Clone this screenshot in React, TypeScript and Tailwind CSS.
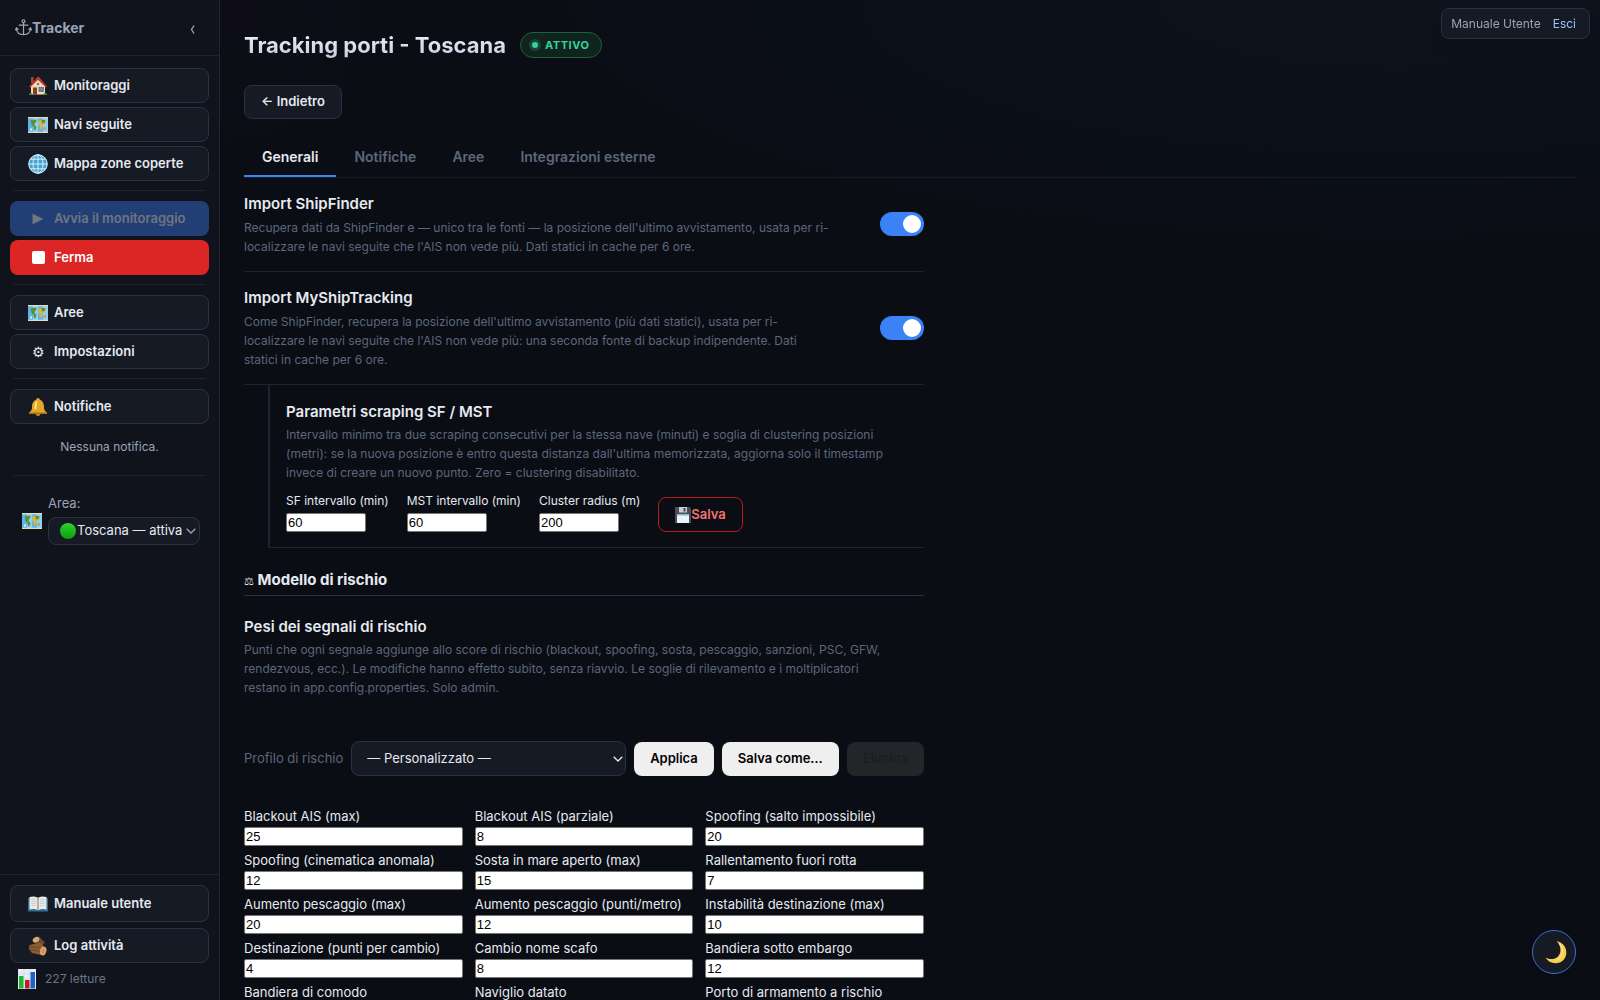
import { ReactNode } from "react"

const weights = [
  ["Blackout AIS (max)", "25"],
  ["Blackout AIS (parziale)", "8"],
  ["Spoofing (salto impossibile)", "20"],
  ["Spoofing (cinematica anomala)", "12"],
  ["Sosta in mare aperto (max)", "15"],
  ["Rallentamento fuori rotta", "7"],
  ["Aumento pescaggio (max)", "20"],
  ["Aumento pescaggio (punti/metro)", "12"],
  ["Instabilità destinazione (max)", "10"],
  ["Destinazione (punti per cambio)", "4"],
  ["Cambio nome scafo", "8"],
  ["Bandiera sotto embargo", "12"],
  ["Bandiera di comodo", "5"],
  ["Naviglio datato", "5"],
  ["Porto di armamento a rischio", "8"],
]

const params = [
  ["SF intervallo (min)", "60"],
  ["MST intervallo (min)", "60"],
  ["Cluster radius (m)", "200"],
]

const tabs = ["Generali", "Notifiche", "Aree", "Integrazioni esterne"]

const inputClass =
  "h-[19px] rounded-xs border border-[#767676] bg-white px-px font-['Liberation_Sans',sans-serif] text-[13px] leading-[17px] text-black"

const HouseIcon = () => (
  <svg viewBox="0 0 20 20" className="size-5">
    <rect x="3" y="1" width="2.5" height="6" fill="#9c4a3a" />
    <path d="M3 10 10 3.5 17 10v8.5H3z" fill="#f3dcb4" />
    <path d="M1 10.5 9.5 1 11 1l8 9.5-1.2 1L10 3.8 2.2 11.5z" fill="#c5362b" />
    <rect x="5" y="11.5" width="4" height="7" fill="#7c4023" />
    <rect x="11" y="11.5" width="4.5" height="4" fill="#4b8fd0" stroke="#8a4b2b" strokeWidth=".7" />
    <circle cx="10" cy="8" r="1.3" fill="#6b7f99" />
    <path d="M1 18.5q1-2.5 3-1.2v1.7H1zM15 19q.5-2.5 2.5-2 2 .5 1.5 2z" fill="#4f8a35" />
  </svg>
)

const MapIcon = () => (
  <svg viewBox="0 0 20 20" className="size-5">
    <path d="M0 2h20v16H0z" fill="#8fd0f2" />
    <path d="M0 2h5v16H0zM10 2h5v16h-5z" fill="#5db4e6" />
    <path d="M0 2h20v1.2H0zM0 16.8h20V18H0z" fill="#e6dcb8" />
    <path d="M2.5 5.5 7 4.5l2 1.5-2 2-.5 2 2 2-1 3-1.3.6-.7-3.6-2-2z" fill="#5c8f38" />
    <path d="M10.5 6 14 4.5l4 1-.5 3-2 .5-1 2-.8 4-1.7-1-.5-3.5-1.5-1z" fill="#d8b83f" />
    <path d="M13.5 5h4l-1 3-2.5.5z" fill="#5c8f38" />
    <circle cx="16.8" cy="13.5" r="1.2" fill="#e08a35" />
    <path d="M2 13.5h2v2H2z" fill="#e8efe6" />
  </svg>
)

const GlobeIcon = () => (
  <svg viewBox="0 0 20 20" className="size-5">
    <circle cx="10" cy="10" r="9.7" fill="#4aa3cf" />
    <g fill="none" stroke="#d4eef8" strokeWidth="1">
      <circle cx="10" cy="10" r="9.2" />
      <ellipse cx="10" cy="10" rx="5" ry="9.2" />
      <path d="M10 .8v18.4M.8 10h18.4M2.5 5.2h15M2.5 14.8h15" />
    </g>
  </svg>
)

const BellIcon = () => (
  <svg viewBox="0 0 20 20" className="size-5">
    <path d="M10 1c1 0 1.8.7 1.8 1.8C15 4 16 7 16 10c0 3 .8 4 3 5.5v1.3H1v-1.3C3.2 14 4 13 4 10c0-3 1-6 4.2-7.2C8.2 1.7 9 1 10 1z" fill="#e3a52a" />
    <path d="M8 4.5C6.5 6 6.5 9 6.3 12h2.2c0-3 .2-6 1-8z" fill="#ffe08a" />
    <path d="M1 15.5h18V17H1z" fill="#a96f14" />
    <path d="M7.5 17h5q-.5 2-2.5 2t-2.5-2z" fill="#c98a1c" />
  </svg>
)

const BookIcon = () => (
  <svg viewBox="0 0 20 20" className="size-5">
    <path d="M0 4h20v13.5H0z" fill="#2d6f8f" />
    <path d="M1.5 3Q6 1.5 10 3.8 14 1.5 18.5 3v12.5q-4.5-1.5-8.5.8-4-2.3-8.5-.8z" fill="#e9e9e6" />
    <path d="M10 3.8v12.5" stroke="#8b8b88" strokeWidth="1.2" />
    <path d="M3.5 5.5H8M3.5 7.5H8M3.5 9.5H8M3.5 11.5H8M12 5.5h4.5M12 7.5h4.5M12 9.5h4.5M12 11.5h4.5" stroke="#c4c4c1" strokeWidth=".7" />
  </svg>
)

const WoodIcon = () => (
  <svg viewBox="0 0 20 20" className="size-5">
    <path d="M5 3.5 11 .5l6 6-5 5.5z" fill="#70492b" />
    <ellipse cx="8" cy="3.8" rx="3.5" ry="2.6" transform="rotate(-30 8 3.8)" fill="#d9a86c" />
    <path d="M1.5 9 12 6.5l5.5 5.5-2.5 7.5L4 17 .8 13z" fill="#8a5b36" />
    <path d="M2 10.5 12 12M2 13.5l10 2" stroke="#6b472a" strokeWidth="1" />
    <ellipse cx="15.2" cy="15" rx="3.2" ry="4.5" transform="rotate(15 15.2 15)" fill="#dba56a" />
    <ellipse cx="15.2" cy="15" rx="1.6" ry="2.5" transform="rotate(15 15.2 15)" fill="#cf9455" />
  </svg>
)

const ChartIcon = () => (
  <svg viewBox="0 0 18 20" className="h-5 w-[18px]">
    <path d="M0 0h18v20H0z" fill="#e8eef4" />
    <path d="M0 5h18M0 10h18M0 15h18M6 0v20M12 0v20" stroke="#c3d2df" strokeWidth=".6" />
    <path d="M1 7h4.5v12.5H1z" fill="#1fb52c" />
    <path d="M7 11h4.5v8.5H7z" fill="#c41c24" />
    <path d="M12.5 3H17v16.5h-4.5z" fill="#1d62c4" />
  </svg>
)

const FloppyIcon = () => (
  <svg viewBox="0 0 16 16" className="size-4">
    <path d="M0 0h14.5L16 1.5V16H0z" fill="#4a4f57" />
    <path d="M4 0h8v5.5H4z" fill="#c9ced4" />
    <path d="M8.5 1h2v3.5h-2z" fill="#42474f" />
    <path d="M2 7h12v9H2z" fill="#eef3f7" />
    <path d="M2 7h12v1.5H2z" fill="#7fb9dd" />
  </svg>
)

const AnchorIcon = () => (
  <svg viewBox="0 0 18 18" className="size-[17px]" fill="none" stroke="#a3a6a8" strokeWidth="1.3">
    <circle cx="9" cy="2.3" r="1.5" />
    <path d="M9 4v12.5M4 6.5h10M1.500 10Q2 16.5 9 16.5T16.5 10M.5 12l1-2.5 2.2 1.5M17.5 12l-1-2.5-2.2 1.5" />
  </svg>
)

const MoonIcon = () => (
  <svg viewBox="0 0 22 24" className="h-6 w-[22px]">
    <path d="M11.5 1C18 2.5 21.8 7.5 21.3 13.5 20.8 19.5 16 23.5 10.5 23.3 6 23.2 2.5 21 .8 17.8 4.5 19.5 9.5 19.8 13 16.5 17 12.5 16 5.5 11.5 1z" fill="#f7cf4a" />
    <path d="M14.5 3.5C19 9 18.5 16.5 12 20" fill="none" stroke="#fbe48c" strokeWidth="1.3" />
  </svg>
)

const Chevron = ({ className }: { className: string }) => (
  <svg viewBox="0 0 10 6" className={`pointer-events-none absolute h-1.5 w-2.5 ${className}`} fill="none" stroke="currentColor" strokeWidth="1.3">
    <path d="m.7.7 4.300 4.300L9.300.7" />
  </svg>
)

const NavButton = ({ icon, height = "h-[35px]", children }: { icon: ReactNode; height?: string; children: ReactNode }) => (
  <button className={`flex w-full shrink-0 items-center gap-1.5 rounded-lg border border-[#2a3142] bg-[#161a24] pl-[17px] text-[13px] font-semibold text-[#e6e9f0] ${height}`}>
    <span className="flex w-5 justify-center">{icon}</span>
    {children}
  </button>
)

const Divider = () => <hr className="mx-[3px] mt-[5px] mb-1.5 border-[#1e2330]" />

const Sidebar = () => {
  return (
    <aside className="flex w-[220px] shrink-0 flex-col border-r border-[#1e2330] bg-[#10131c]">
      <div className="flex h-14 shrink-0 items-center justify-between border-b border-[#1e2330] pr-6 pl-[15px]">
        <span className="flex items-center text-sm font-bold text-[#9aa3b8]">
          <AnchorIcon />
          Tracker
        </span>
        <button aria-label="Comprimi" className="text-[#9aa3b8]">
          <svg viewBox="0 0 5 9" className="mt-1 h-[9px] w-[5px]" fill="none" stroke="currentColor" strokeWidth="1.3">
            <path d="M4 .5 1.5 4.5 4 8.5" />
          </svg>
        </button>
      </div>
      <nav className="flex grow flex-col gap-1 px-2.5 pt-3">
        <NavButton icon={<HouseIcon />}>Monitoraggi</NavButton>
        <NavButton icon={<MapIcon />}>Navi seguite</NavButton>
        <NavButton icon={<GlobeIcon />}>Mappa zone coperte</NavButton>
        <Divider />
        <button disabled className="flex h-[35px] shrink-0 items-center gap-1.5 rounded-lg bg-[#223f75] pl-[18px] text-[13px] font-semibold text-[#70757f]">
          <span className="flex w-5 justify-center">
            <svg viewBox="0 0 12 12" className="size-3" fill="currentColor">
              <path d="M.5.8v10.4L11.5 6z" />
            </svg>
          </span>
          Avvia il monitoraggio
        </button>
        <button className="flex h-[35px] shrink-0 items-center gap-1.5 rounded-lg bg-[#dc2626] pl-[18px] text-[13px] font-semibold text-white">
          <span className="flex w-5 justify-center">
            <span className="size-[13px] rounded-xs bg-white" />
          </span>
          Ferma
        </button>
        <Divider />
        <NavButton icon={<MapIcon />}>Aree</NavButton>
        <NavButton icon={<span className="text-sm font-normal">⚙</span>}>Impostazioni</NavButton>
        <Divider />
        <NavButton icon={<BellIcon />}>Notifiche</NavButton>
        <p className="py-[9px] text-center text-xs leading-5 text-[#9aa3b8]">Nessuna notifica.</p>
        <Divider />
        <div className="flex items-center gap-1.5 pt-[7px] pr-[9px] pl-3">
          <span className="shrink-0 pt-1">
            <MapIcon />
          </span>
          <div className="flex min-w-0 grow flex-col gap-1">
            <label htmlFor="area" className="text-[13px] leading-5 text-[#9aa3b8]">Area:</label>
            <div className="relative">
              <select id="area" className="h-7 w-full appearance-none rounded-lg border border-[#2a3142] bg-[#161a24] pl-7 text-[13px] text-[#e6e9f0]">
                <option>Toscana — attiva</option>
              </select>
              <span className="pointer-events-none absolute top-1.5 left-3 size-4 rounded-full bg-linear-to-b from-[#2bd42b] to-[#0a9c12]" />
              <Chevron className="top-[11px] right-1 text-[#9aa3b8]" />
            </div>
          </div>
        </div>
      </nav>
      <div className="flex flex-col gap-1.5 border-t border-[#1e2330] px-2.5 pt-2.5 pb-[11px]">
        <NavButton icon={<BookIcon />} height="h-[37px]">Manuale utente</NavButton>
        <NavButton icon={<WoodIcon />}>Log attività</NavButton>
        <div className="flex items-center gap-[9px] pl-2 text-xs leading-5 text-[#6b7488]">
          <ChartIcon />
          227 letture
        </div>
      </div>
    </aside>
  )
}

const Toggle = ({ label }: { label: string }) => (
  <label className="relative block h-6 w-11 shrink-0 rounded-full bg-[#3b82f6]">
    <input type="checkbox" defaultChecked aria-label={label} className="peer sr-only" />
    <span className="absolute top-[3px] right-[3px] size-[18px] rounded-full bg-white" />
  </label>
)

const Setting = ({ title, children }: { title: string; children: ReactNode }) => (
  <div className="flex items-center justify-between gap-6 border-b border-[#1e2330] pt-3.5 pb-[15px]">
    <div>
      <h3 className="text-[15px] leading-6 font-semibold">{title}</h3>
      <p className="mt-0.5 max-w-[586px] text-xs leading-[19px] text-[#5d667c]">{children}</p>
    </div>
    <Toggle label={title} />
  </div>
)

const App = () => {
  return (
    <div className="flex h-screen overflow-hidden bg-[#0a0d14] font-[Inter,sans-serif] text-[#e6e9f0]">
      <Sidebar />
      <main className="min-w-0 grow overflow-hidden bg-[radial-gradient(ellipse_900px_260px_at_85%_0%,#0d121d,transparent),radial-gradient(ellipse_220px_220px_at_0%_0%,#0e0d17,transparent)] px-6 pt-[30px]">
        <div className="flex items-center gap-3.5">
          <h1 className="bg-linear-to-b from-[#f1f4fa] to-[#c3cbdc] bg-clip-text text-[22px] leading-[30px] font-bold text-transparent">
            Tracking porti - Toscana
          </h1>
          <span className="flex h-[26px] items-center gap-[7px] rounded-full border border-[#166534] bg-[#10231f] px-[11px] text-[11px] font-bold tracking-wider text-[#34d399]">
            <span className="size-1.5 rounded-full bg-[#34d399] ring-3 ring-[#34d399]/20" />
            ATTIVO
          </span>
        </div>
        <button className="mt-[25px] flex h-[34px] items-center rounded-lg border border-[#2a3142] bg-[#161a24] px-4 text-[13px] font-semibold">
          ← Indietro
        </button>
        <div role="tablist" className="mt-5 flex border-b border-[#171b26]">
          {tabs.map((tab, i) => (
            <button
              key={tab}
              role="tab"
              aria-selected={i === 0}
              className={
                i === 0
                  ? "h-[38px] border-b-2 border-[#3b82f6] px-[18px] text-sm font-semibold"
                  : "h-[38px] border-b-2 border-transparent px-[18px] text-sm font-semibold text-[#5d667c]"
              }
            >
              {tab}
            </button>
          ))}
        </div>

        <div className="max-w-[680px]">
          <Setting title="Import ShipFinder">
            Recupera dati da ShipFinder e — unico tra le fonti — la posizione dell'ultimo avvistamento, usata per
            ri-localizzare le navi seguite che l'AIS non vede più. Dati statici in cache per 6 ore.
          </Setting>
          <Setting title="Import MyShipTracking">
            Come ShipFinder, recupera la posizione dell'ultimo avvistamento (più dati statici), usata per
            ri-localizzare le navi seguite che l'AIS non vede più: una seconda fonte di backup indipendente. Dati
            statici in cache per 6 ore.
          </Setting>

          <section className="ml-6 border-b border-l-2 border-[#1e2330] py-[15px] pl-4">
            <h3 className="text-[15px] leading-6 font-semibold">Parametri scraping SF / MST</h3>
            <p className="mt-px max-w-[610px] text-xs leading-[19px] text-[#5d667c]">
              Intervallo minimo tra due scraping consecutivi per la stessa nave (minuti) e soglia di clustering
              posizioni (metri): se la nuova posizione è entro questa distanza dall'ultima memorizzata, aggiorna
              solo il timestamp invece di creare un nuovo punto. Zero = clustering disabilitato.
            </p>
            <div className="mt-[9px] flex items-end gap-[18px]">
              {params.map(([label, value]) => (
                <label key={label} className="flex flex-col gap-0.5 text-xs leading-5">
                  {label}
                  <input defaultValue={value} className={`w-20 ${inputClass}`} />
                </label>
              ))}
              <button className="flex h-[35px] items-center rounded-lg border border-[#b91c1c] px-4 text-[13px] font-semibold text-[#f87171]">
                <FloppyIcon />
                Salva
              </button>
            </div>
          </section>

          <h2 className="mt-5 border-b border-[#2a3142] pb-0.5 text-[15px] leading-6 font-bold">
            <span className="text-[11px] font-normal">⚖</span> Modello di rischio
          </h2>

          <h3 className="mt-[19px] text-[15px] leading-6 font-semibold">Pesi dei segnali di rischio</h3>
          <p className="mt-px max-w-[650px] text-xs leading-[19px] text-[#5d667c]">
            Punti che ogni segnale aggiunge allo score di rischio (blackout, spoofing, sosta, pescaggio, sanzioni, PSC,
            GFW, rendezvous, ecc.). Le modifiche hanno effetto subito, senza riavvio. Le soglie di rilevamento e i
            moltiplicatori restano in app.config.properties. Solo admin.
          </p>

          <div className="mt-11 flex items-center gap-2">
            <label htmlFor="profile" className="text-[13px] text-[#5d667c]">Profilo di rischio</label>
            <div className="relative min-w-0 grow">
              <select id="profile" className="block h-[35px] w-full appearance-none rounded-lg border border-[#2a3142] bg-[#161a24] pl-[15px] text-[13px]">
                <option>— Personalizzato —</option>
              </select>
              <Chevron className="top-[15px] right-[3px]" />
            </div>
            <button className="h-[34px] rounded-lg bg-[#efefef] px-4 text-[13px] font-semibold text-black">Applica</button>
            <button className="h-[34px] rounded-lg bg-[#efefef] px-4 text-[13px] font-semibold text-black">Salva come…</button>
            <button disabled className="h-[34px] rounded-lg bg-[#242529] px-4 text-[13px] font-semibold text-[#1b1d22]">Elimina</button>
          </div>

          <div className="mt-[30px] grid grid-cols-3 gap-x-3 gap-y-1">
            {weights.map(([label, value]) => (
              <label key={label} className="flex flex-col text-[13px] leading-[21px]">
                {label}
                <input defaultValue={value} className={inputClass} />
              </label>
            ))}
          </div>
        </div>
      </main>

      <div className="fixed top-2 right-2.5 flex h-[31px] items-center gap-3 rounded-lg border border-[#2a3142] bg-[#161a24] pr-[13px] pl-[9px] text-xs text-[#9aa3b8] shadow-lg">
        <a href="#manuale">Manuale Utente</a>
        <a href="#esci" className="text-[#93c5fd]">Esci</a>
      </div>
      <button aria-label="Tema" className="fixed right-6 bottom-[26px] flex size-11 items-center justify-center rounded-full border border-[#3b6fd0] bg-[#161a24] pl-1 shadow-lg">
        <MoonIcon />
      </button>
    </div>
  )
}

export default App
